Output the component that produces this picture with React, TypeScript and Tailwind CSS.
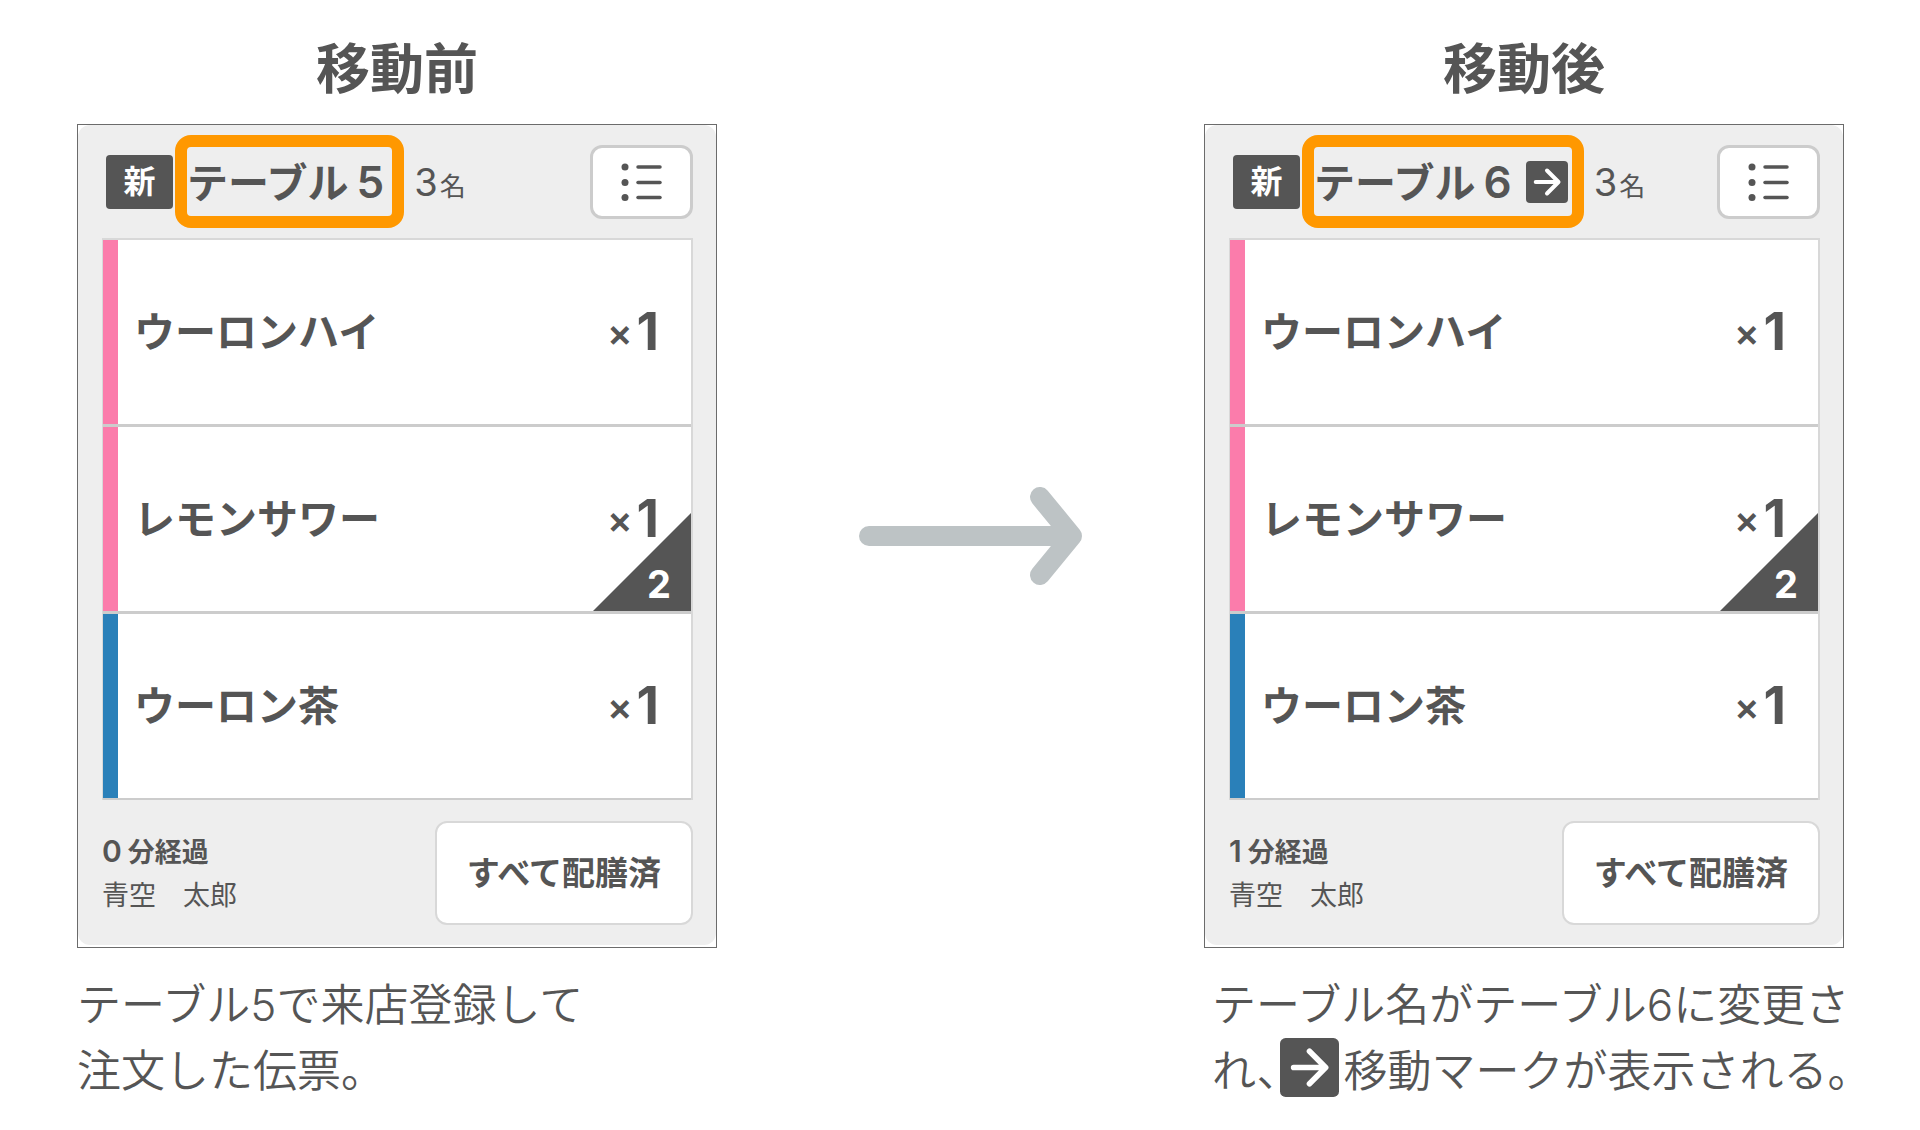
type Item = { name: string; count: number; bar: string; served?: number };

type Slip = {
  title: string;
  table: string;
  number: string;
  moved: boolean;
  elapsed: string;
};

const ITEMS: Item[] = [
  { name: "ウーロンハイ", count: 1, bar: "bg-[#fb7cab]" },
  { name: "レモンサワー", count: 1, bar: "bg-[#fb7cab]", served: 2 },
  { name: "ウーロン茶", count: 1, bar: "bg-[#2a80b9]" },
];

const BEFORE: Slip = { title: "移動前", table: "テーブル", number: "5", moved: false, elapsed: "0" };
const AFTER: Slip = { title: "移動後", table: "テーブル", number: "6", moved: true, elapsed: "1" };

/** White arrow on a dark tile, shown once a slip has changed tables. */
function MoveMark({ className }: { className: string }) {
  return (
    <svg viewBox="0 0 42 42" className={className} role="img" aria-label="移動マーク">
      <rect width="42" height="42" rx="4" fill="#555" />
      <path
        d="M9.7 21h22M21 9.5l11.5 11.5L21 32.5"
        fill="none"
        stroke="#fff"
        strokeWidth="4"
        strokeLinecap="round"
        strokeLinejoin="round"
      />
    </svg>
  );
}

function ListIcon() {
  return (
    <svg viewBox="0 0 42 40" className="h-10 w-[42px]" aria-hidden="true">
      {[5, 20.5, 35.5].map((y) => (
        <g key={y}>
          <circle cx="4" cy={y} r="3.5" fill="#555" />
          <path d={`M17 ${y}h22`} stroke="#555" strokeWidth="3.5" strokeLinecap="round" />
        </g>
      ))}
    </svg>
  );
}

function ItemRow({ item }: { item: Item }) {
  return (
    <li className="relative flex h-[187px] border-b-3 border-[#ccc] bg-white last:h-[186px] last:border-b-2">
      <span className={`w-[15px] shrink-0 ${item.bar}`} />
      <div className="flex flex-1 items-center justify-between pr-8 pl-4">
        <span className="text-[41px] leading-none">{item.name}</span>
        <span className="flex items-center gap-1 leading-none">
          <span className="text-[38px] leading-none">×</span>
          <span className="text-[52px] leading-none font-bold">{item.count}</span>
        </span>
      </div>
      {item.served && (
        <span className="absolute right-0 bottom-0 flex h-[98px] w-[98px] items-end justify-end bg-[#555] pr-5 pb-2 text-[38px] leading-none font-bold text-white [clip-path:polygon(100%_0,100%_100%,0_100%)]">
          {item.served}
        </span>
      )}
    </li>
  );
}

function SlipCard({ slip }: { slip: Slip }) {
  return (
    <section className="border border-[#6b6b6b]">
      <div className="mb-[2px] rounded-xl bg-[#eee] pt-[10px] pr-[23px] pb-5 pl-6 font-semibold">
        <header className="flex items-center pl-1">
          <span className="flex h-[54px] w-[67px] items-center justify-center rounded bg-[#555] text-[32px] leading-none text-white">
            新
          </span>
          <h2
            className={`ml-[2px] flex h-[93px] items-center gap-[14px] rounded-2xl border-12 border-[#ff9800] text-[41px] leading-none ${slip.moved ? "pr-1" : "pr-2"}`}
          >
            <span className="flex items-baseline gap-2">
              {slip.table}
              <span className="text-[44px] leading-none">{slip.number}</span>
            </span>
            {slip.moved && <MoveMark className="size-[42px]" />}
          </h2>
          <p className="ml-[10px] flex items-baseline gap-[2px] text-[26px] leading-none font-normal">
            <span className="text-[38px] leading-none">3</span>名
          </p>
          <button
            type="button"
            aria-label="メニュー"
            className="ml-auto flex h-[74px] w-[103px] items-center justify-center rounded-xl border-3 border-[#ccc] bg-white"
          >
            <ListIcon />
          </button>
        </header>

        <ul className="mt-[10px] border-t-2 border-r-2 border-l border-[#d8d8d8]">
          {ITEMS.map((item) => (
            <ItemRow key={item.name} item={item} />
          ))}
        </ul>

        <footer className="mt-[21px] flex items-center justify-between">
          <div className="pt-[2px] text-[27px] leading-[43px]">
            <p className="flex items-baseline gap-[6px]">
              <span className="text-[30px] leading-none">{slip.elapsed}</span>分経過
            </p>
            <p className="font-normal">青空　太郎</p>
          </div>
          <button
            type="button"
            className="h-[104px] rounded-xl border-2 border-[#d8d8d8] bg-white px-[30px] text-[33px] leading-none"
          >
            すべて配膳済
          </button>
        </footer>
      </div>
    </section>
  );
}

export default function App() {
  return (
    <main className="grid grid-cols-[minmax(0,640fr)_minmax(0,487fr)_minmax(0,640fr)] bg-white pr-[76px] pl-[77px] font-[Inter,'Noto_Sans_CJK_JP',sans-serif] text-[#555]">
      <figure>
        <h1 className="pt-[34px] pb-[18px] text-center text-[54px] leading-[72px] font-bold">{BEFORE.title}</h1>
        <SlipCard slip={BEFORE} />
        <figcaption className="pt-6 text-[44px] leading-[66px] font-[350] whitespace-nowrap">
          テーブル5で来店登録して
          <br />
          注文した伝票。
        </figcaption>
      </figure>

      <svg
        viewBox="0 0 224 98"
        className="mt-[487px] ml-5 h-[98px] w-[224px] justify-self-center"
        fill="none"
        stroke="#bdc3c5"
        strokeWidth="20"
        strokeLinecap="round"
        strokeLinejoin="round"
        aria-hidden="true"
      >
        <path d="M10 49h203M181 10l32 39-32 39" />
      </svg>

      <figure>
        <h1 className="pt-[34px] pb-[18px] text-center text-[54px] leading-[72px] font-bold">{AFTER.title}</h1>
        <SlipCard slip={AFTER} />
        <figcaption className="pt-6 pl-2 text-[44px] leading-[66px] font-[350] whitespace-nowrap">
          <p>テーブル名がテーブル6に変更さ</p>
          <p className="flex items-start">
            れ、
            <MoveMark className="mr-1 -ml-5 size-[59px] shrink-0" />
            移動マークが表示される。
          </p>
        </figcaption>
      </figure>
    </main>
  );
}
